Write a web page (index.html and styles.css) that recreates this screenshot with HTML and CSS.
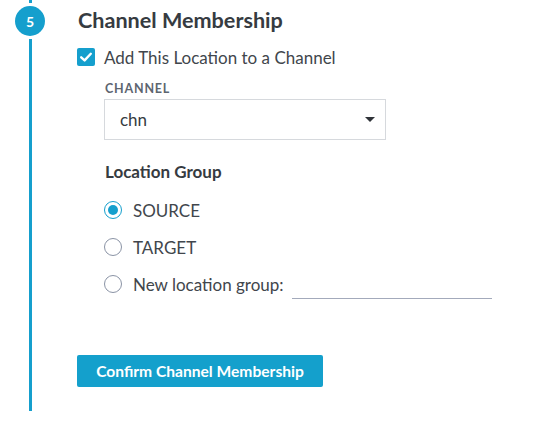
FILE: index.html
```html
<!DOCTYPE html>
<html>
<head>
<meta charset="utf-8">
<link rel="stylesheet" href="styles.css">
</head>
<body>
<div class="step">
  <div class="rail">
    <div class="rail-top"></div>
    <div class="badge">5</div>
    <div class="rail-line"></div>
  </div>
  <div class="content">
    <h2 class="title">Channel Membership</h2>
    <label class="check-row">
      <span class="checkbox">
        <svg viewBox="0 0 18 18" width="18" height="18"><path d="M4.2 9.3 L7.6 12.4 L13.8 5.8" fill="none" stroke="#fff" stroke-width="2.4" stroke-linecap="round" stroke-linejoin="round"/></svg>
      </span>
      <span class="check-text">Add This Location to a Channel</span>
    </label>
    <div class="field">
      <div class="field-label">CHANNEL</div>
      <div class="select">
        <span class="select-value">chn</span>
        <span class="caret"></span>
      </div>
    </div>
    <div class="group">
      <div class="group-title">Location Group</div>
      <div class="radios">
        <label class="radio-row"><span class="radio checked"></span><span class="radio-text">SOURCE</span></label>
        <label class="radio-row"><span class="radio"></span><span class="radio-text">TARGET</span></label>
        <label class="radio-row"><span class="radio"></span><span class="radio-text">New location group:</span><span class="text-input"></span></label>
      </div>
    </div>
    <button class="confirm">Confirm Channel Membership</button>
  </div>
</div>
</body>
</html>
```
FILE: styles.css
```css
html, body {
  margin: 0;
  padding: 0;
  background: #ffffff;
}
body {
  font-family: Lato, "Noto Sans", sans-serif;
  color: #363b41;
  width: 538px;
  height: 425px;
  overflow: hidden;
}
.step {
  display: flex;
  align-items: stretch;
}
.rail {
  width: 60px;
  display: flex;
  flex-direction: column;
  align-items: center;
  flex: none;
}
.rail-top {
  width: 3px;
  height: 3px;
  background: #159fcd;
  margin-bottom: 3px;
}
.badge {
  width: 30px;
  height: 30px;
  border-radius: 50%;
  background: #159fcd;
  color: #fff;
  font-weight: 700;
  font-size: 14px;
  display: flex;
  align-items: center;
  justify-content: center;
}
.rail-line {
  width: 3px;
  height: 372px;
  margin-top: 3px;
  background: #159fcd;
}
.content {
  padding-left: 17px;
  display: flex;
  flex-direction: column;
  align-items: flex-start;
}
.title {
  margin: 6px 0 0 1px;
  font-size: 21.6px;
  font-weight: 700;
  line-height: 28px;
  color: #363b41;
}
.check-row {
  display: flex;
  align-items: center;
  margin-top: 14px;
  height: 18px;
}
.checkbox {
  width: 18px;
  height: 18px;
  border-radius: 2px;
  background: #159fcd;
  display: block;
}
.checkbox svg { display: block; }
.check-text {
  margin-left: 9px;
  font-size: 17px;
  color: #41464c;
}
.field {
  margin-left: 27px;
  margin-top: 16px;
}
.field-label {
  font-size: 12.5px;
  font-weight: 700;
  letter-spacing: 0.8px;
  color: #5d6570;
  line-height: 14px;
  margin-left: 1px;
}
.select {
  box-sizing: border-box;
  margin-top: 3px;
  width: 282px;
  height: 41px;
  border: 1px solid #d6d9dd;
  display: flex;
  align-items: center;
  justify-content: space-between;
  padding: 0 10px 0 15px;
}
.select-value {
  font-size: 17px;
  color: #363b41;
}
.caret {
  width: 0;
  height: 0;
  border-left: 5px solid transparent;
  border-right: 5px solid transparent;
  border-top: 5px solid #2f3338;
}
.group {
  margin-left: 28px;
  margin-top: 22px;
}
.group-title {
  font-size: 17px;
  font-weight: 700;
  line-height: 20px;
  color: #363b41;
}
.radios {
  display: flex;
  flex-direction: column;
  gap: 19px;
  margin-top: 19px;
  margin-left: -1px;
}
.radio-row {
  display: flex;
  align-items: center;
  height: 18px;
}
.radio {
  width: 18px;
  height: 18px;
  box-sizing: border-box;
  border-radius: 50%;
  border: 1px solid #8a93a5;
  display: flex;
  align-items: center;
  justify-content: center;
  flex: none;
}
.radio.checked {
  border-color: #159fcd;
}
.radio.checked::after {
  content: "";
  width: 10px;
  height: 10px;
  border-radius: 50%;
  background: #159fcd;
}
.radio-text {
  margin-left: 11px;
  font-size: 17px;
  color: #41464c;
}
.text-input {
  width: 200px;
  height: 23px;
  margin-left: 8px;
  align-self: flex-start;
  border-bottom: 1px solid #a3aabb;
}
.confirm {
  margin-top: 62px;
  width: 246px;
  height: 32px;
  border: none;
  border-radius: 2px;
  background: #14a0cc;
  color: #ffffff;
  font-family: Lato, "Noto Sans", sans-serif;
  font-size: 15.6px;
  font-weight: 700;
  padding: 0;
}
```
